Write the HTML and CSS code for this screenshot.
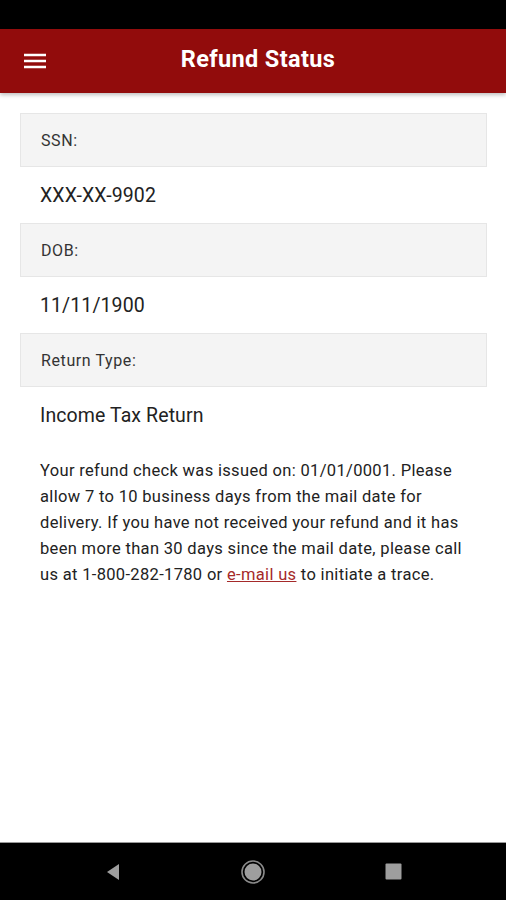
FILE: index.html
```html
<!DOCTYPE html>
<html lang="en">
<head>
<meta charset="UTF-8">
<meta name="viewport" content="width=device-width, initial-scale=1.0">
<title>Refund Status</title>
<link rel="stylesheet" href="styles.css">
</head>
<body>
<div class="phone">
  <div class="status-bar"></div>
  <div class="app-bar">
    <div class="menu">
      <svg width="24" height="24" viewBox="0 0 24 24"><path d="M1 6h22M1 12h22M1 18h22" stroke="#fff" stroke-width="2.4" fill="none"/></svg>
    </div>
    <div class="title">Refund Status</div>
  </div>

  <div class="content">
    <div class="label">SSN:</div>
    <div class="value">XXX-XX-9902</div>
    <div class="label">DOB:</div>
    <div class="value">11/11/1900</div>
    <div class="label">Return Type:</div>
    <div class="value">Income Tax Return</div>
    <p class="message">Your refund check was issued on: 01/01/0001. Please allow 7 to 10 business days from the mail date for delivery. If you have not received your refund and it has been more than 30 days since the mail date, please call us at 1-800-282-1780 or <a href="#">e-mail us</a> to initiate a trace.</p>
  </div>

  <div class="nav-bar">
    <div class="nav-btn">
      <svg width="16" height="18" viewBox="0 0 16 18"><path d="M14 1v16L2 9z" fill="#9e9e9e"/></svg>
    </div>
    <div class="nav-btn">
      <svg width="26" height="26" viewBox="0 0 26 26"><circle cx="13" cy="13" r="11" fill="none" stroke="#8a8a8a" stroke-width="1.6"/><circle cx="13" cy="13" r="8.5" fill="#9e9e9e"/></svg>
    </div>
    <div class="nav-btn">
      <svg width="17" height="17" viewBox="0 0 17 17"><rect x="0.5" y="0.5" width="16" height="16" rx="1" fill="#9e9e9e"/></svg>
    </div>
  </div>
</div>
</body>
</html>
```

FILE: styles.css
```css
body {
  margin: 0;
  font-family: Roboto, "Noto Sans", sans-serif;
  background-color: #fff;
}

.phone {
  width: 506px;
  height: 900px;
  display: flex;
  flex-direction: column;
}

.status-bar {
  height: 29px;
  background-color: #000;
}

.app-bar {
  height: 64px;
  background-color: #920c0c;
  display: flex;
  align-items: center;
  box-shadow: 0 2px 4px rgba(0, 0, 0, 0.25);
}

.menu {
  width: 24px;
  height: 24px;
  margin-left: 23px;
}

.title {
  flex: 1;
  text-align: center;
  color: #fff;
  font-size: 23.5px;
  font-weight: 700;
  letter-spacing: 0.35px;
  margin-right: 37px;
  margin-top: -4px;
}

.content {
  flex: 1;
  padding: 20px 19px 0 20px;
}

.label {
  height: 52px;
  display: flex;
  align-items: center;
  padding-left: 20px;
  background-color: #f4f4f4;
  border: 1px solid #e6e6e6;
  font-size: 16px;
  letter-spacing: 0.6px;
  color: #333;
}

.value {
  height: 56px;
  display: flex;
  align-items: center;
  padding-left: 20px;
  font-size: 19.5px;
  letter-spacing: 0.1px;
  color: #222;
}

.message {
  margin: 15px 0 0 20px;
  padding-right: 20px;
  font-size: 16.5px;
  letter-spacing: 0.33px;
  line-height: 26px;
  color: #222;
}

.message a {
  color: #a52a2a;
}

.nav-bar {
  height: 57px;
  background-color: #000;
  border-top: 1px solid #999;
  display: flex;
  align-items: center;
  justify-content: center;
}

.nav-btn {
  width: 140px;
  display: flex;
  justify-content: center;
}
```
